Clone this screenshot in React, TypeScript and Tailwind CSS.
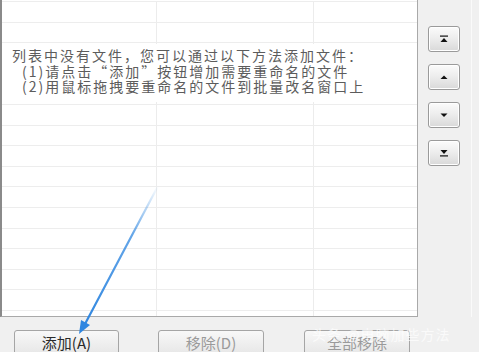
import React from "react";

const cjk = { fontFamily: '"Noto Sans CJK SC", "Noto Sans", sans-serif' };

const rows = Array.from({ length: 16 }, (_, i) => i);

function MoveButton({ kind }: { kind: "top" | "up" | "down" | "bottom" }) {
  return (
    <button className="flex h-[26px] w-[32px] items-center justify-center rounded-[3px] border border-[#9a9a9a] bg-gradient-to-b from-[#fbfbfb] via-[#ececec] to-[#d9d9d9] shadow-[inset_0_0_0_1px_#ffffff]">
      <svg width="10" height="8" viewBox="0 0 10 8">
        {kind === "top" && (
          <>
            <rect x="1" y="0.5" width="8" height="1.2" fill="#111" />
            <polygon points="5,3 8.5,7 1.5,7" fill="#111" />
          </>
        )}
        {kind === "up" && <polygon points="5,2.5 8.5,6 1.5,6" fill="#111" />}
        {kind === "down" && <polygon points="1.5,2.5 8.5,2.5 5,6" fill="#111" />}
        {kind === "bottom" && (
          <>
            <polygon points="1.5,1 8.5,1 5,5" fill="#111" />
            <rect x="1" y="6.3" width="8" height="1.2" fill="#111" />
          </>
        )}
      </svg>
    </button>
  );
}

function ActionButton({ label, disabled, width }: { label: string; disabled?: boolean; width: string }) {
  return (
    <button
      style={cjk}
      className={`flex h-[26px] ${width} items-start justify-center rounded-[3px] border border-[#a5a5a5] bg-gradient-to-b from-[#f8f8f8] to-[#e6e6e6] pt-[3px] text-[15px] leading-[18px] ${
        disabled ? "text-[#9a9a9a]" : "text-[#2a2a2a]"
      }`}
    >
      {label}
    </button>
  );
}

export default function App() {
  return (
    <div className="relative h-[352px] w-[479px] overflow-hidden bg-[#f0f0f0]">
      <div className="flex">
        <div className="relative h-[317px] w-[418px] overflow-hidden border-b border-l-2 border-r border-b-[#a9a9a9] border-l-[#8a8a8a] border-r-[#a9a9a9] bg-white">
          <div className="h-[2px] border-b border-[#ededed]" />
          {rows.map((r) => (
            <div key={r} className="grid h-[20.6px] grid-cols-[155px_157px_1fr] border-b border-[#ededed]">
              <div className="border-r border-[#ececec]" />
              <div className="border-r border-[#ececec]" />
              <div />
            </div>
          ))}
          <div
            style={cjk}
            className="absolute left-0 right-0 top-[44px] h-[58px] bg-white pl-[10px] pt-[4px] text-[14px] leading-[15.5px] tracking-[2px] text-[#5c5c5c]"
          >
            <div>列表中没有文件，您可以通过以下方法添加文件：</div>
            <div className="pl-[10px]">(1)请点击“添加”按钮增加需要重命名的文件</div>
            <div className="pl-[10px]">(2)用鼠标拖拽要重命名的文件到批量改名窗口上</div>
          </div>
        </div>
        <div className="flex flex-1">
          <div className="flex w-[54px] flex-col items-start gap-[12px] border-r border-[#fafafa] pl-[10px] pt-[26px]">
            <MoveButton kind="top" />
            <MoveButton kind="up" />
            <MoveButton kind="down" />
            <MoveButton kind="bottom" />
          </div>
        </div>
      </div>
      <div className="mt-[13px] flex">
        <div className="ml-[14px]">
          <ActionButton label="添加(A)" width="w-[105px]" />
        </div>
        <div className="ml-[39px]">
          <ActionButton label="移除(D)" disabled width="w-[106px]" />
        </div>
        <div className="ml-[40px]">
          <ActionButton label="全部移除" disabled width="w-[106px]" />
        </div>
      </div>
      <div
        style={cjk}
        className="absolute left-[312px] top-[324px] text-[14px] tracking-[1px] text-white/70"
      >
        头条 @电脑加些方法
      </div>
      <svg className="pointer-events-none absolute left-0 top-0" width="479" height="352" viewBox="0 0 479 352">
        <defs>
          <linearGradient id="arrowFade" x1="158" y1="186" x2="84" y2="326" gradientUnits="userSpaceOnUse">
            <stop offset="0" stopColor="#3d8fe2" stopOpacity="0" />
            <stop offset="0.35" stopColor="#3d8fe2" stopOpacity="0.8" />
            <stop offset="1" stopColor="#2f86e0" stopOpacity="1" />
          </linearGradient>
        </defs>
        <line x1="158" y1="186" x2="85" y2="324" stroke="url(#arrowFade)" strokeWidth="2.2" strokeLinecap="round" />
        <polygon points="79,334 81,320 90,325" fill="#2f86e0" />
      </svg>
    </div>
  );
}
